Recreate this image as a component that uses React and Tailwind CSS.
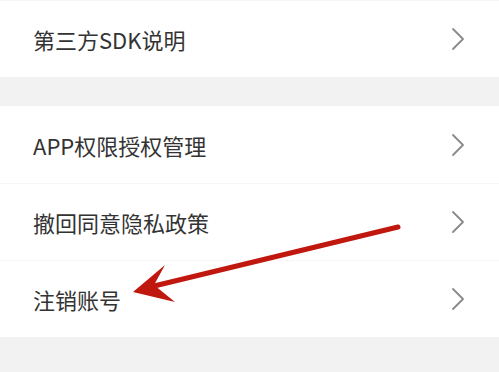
const Chevron = () => (
  <svg width="14" height="24" viewBox="0 0 14 24" fill="none">
    <path d="M2 2 L12 12 L2 22" stroke="#8a8a8a" strokeWidth="1.8" strokeLinecap="round" strokeLinejoin="round" />
  </svg>
);

const Row = ({ label, border, h = "h-[77px]" }) => (
  <div
    className={`flex items-center justify-between ${h} pl-[33px] pr-[34px] bg-white ${
      border ? "border-t border-[#f7f7f7]" : ""
    }`}
  >
    <span className="text-[22px] text-[#333333] leading-none">{label}</span>
    <Chevron />
  </div>
);

export default function App() {
  return (
    <div
      className="relative w-[499px] h-[372px] overflow-hidden bg-[#f2f2f2]"
      style={{ fontFamily: '"Noto Sans CJK SC", "Noto Sans", sans-serif' }}
    >
      <div className="h-[1px] bg-[#f4f4f4]" />
      <Row label="第三方SDK说明" h="h-[76px]" />
      <div className="h-[29px]" />
      <Row label="APP权限授权管理" />
      <Row label="撤回同意隐私政策" border />
      <Row label="注销账号" border />

      <svg className="absolute left-0 top-0" width="499" height="372" viewBox="0 0 499 372">
        <line x1="150" y1="287" x2="398" y2="227" stroke="#c0170f" strokeWidth="5" strokeLinecap="round" />
        <path d="M133 292 L165 265 L154 285 L175 302 Z" fill="#c0170f" />
      </svg>
    </div>
  );
}
